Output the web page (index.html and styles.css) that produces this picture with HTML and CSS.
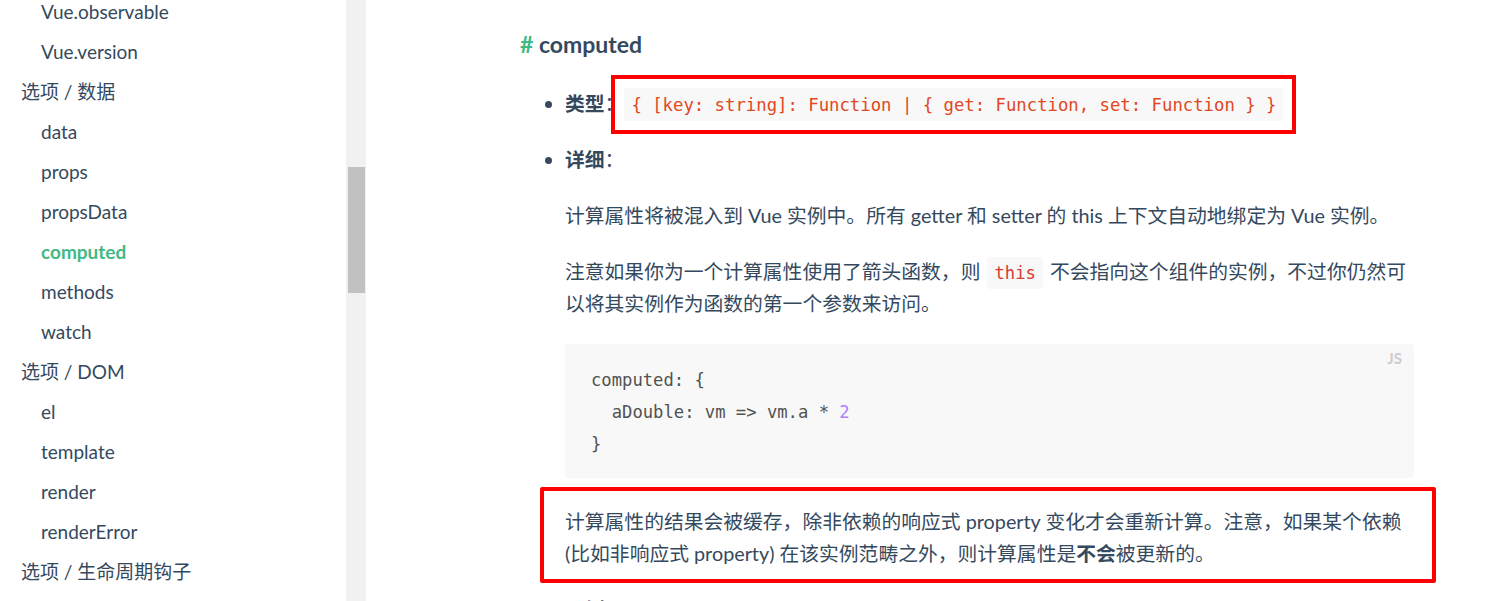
FILE: index.html
```html
<!DOCTYPE html>
<html lang="zh-CN">
<head>
<meta charset="utf-8">
<title>computed</title>
<link rel="stylesheet" href="styles.css">
</head>
<body>
<aside class="sidebar">
  <ul class="nav">
    <li class="sub">Vue.observable</li>
    <li class="sub">Vue.version</li>
    <li class="section">选项 / 数据</li>
    <li class="sub">data</li>
    <li class="sub">props</li>
    <li class="sub">propsData</li>
    <li class="sub active">computed</li>
    <li class="sub">methods</li>
    <li class="sub">watch</li>
    <li class="section">选项 / DOM</li>
    <li class="sub">el</li>
    <li class="sub">template</li>
    <li class="sub">render</li>
    <li class="sub">renderError</li>
    <li class="section">选项 / 生命周期钩子</li>
  </ul>
</aside>
<div class="scrollbar"><div class="thumb"></div></div>
<main class="main">
  <div class="content">
    <h3 class="title"><span class="hash">#</span> computed</h3>
    <ul class="props">
      <li><strong>类型</strong>：<code class="inline type">{ [key: string]: Function | { get: Function, set: Function } }</code></li>
      <li><strong>详细</strong>：
        <p>计算属性将被混入到 Vue 实例中。所有 getter 和 setter 的 this 上下文自动地绑定为 Vue 实例。</p>
        <p>注意如果你为一个计算属性使用了箭头函数，则 <code class="inline kw">this</code> 不会指向这个组件的实例，不过你仍然可以将其实例作为函数的第一个参数来访问。</p>
        <pre class="code"><span class="lang">JS</span><code>computed: {
  aDouble: vm =&gt; vm.a * <span class="num">2</span>
}</code></pre>
        <p class="boxed">计算属性的结果会被缓存，除非依赖的响应式 property 变化才会重新计算。注意，如果某个依赖 (比如非响应式 property) 在该实例范畴之外，则计算属性是<strong>不会</strong>被更新的。</p>
      </li>
      <li><strong>示例</strong>：</li>
    </ul>
  </div>
</main>
</body>
</html>
```

FILE: styles.css
```css
html, body {
  margin: 0;
  padding: 0;
  background: #fff;
}

body {
  display: flex;
  height: 601px;
  overflow: hidden;
  font-family: Lato, "Noto Sans CJK SC", sans-serif;
  color: #34495e;
}

.sidebar {
  flex: none;
  width: 346px;
  overflow: hidden;
}

.nav {
  list-style: none;
  margin: -8px 0 0;
  padding: 0 0 0 21px;
  font-size: 19px;
}

.nav li {
  line-height: 40px;
  white-space: nowrap;
}

.nav .sub {
  padding-left: 20px;
}

.nav .active {
  color: #42b983;
  font-weight: 700;
}

.scrollbar {
  flex: none;
  width: 20px;
  height: 601px;
  background: #f1f1f1;
}

.thumb {
  margin: 167px 0 0 2px;
  width: 17px;
  height: 126px;
  background: #c1c1c1;
}

.main {
  flex: 1;
  padding-left: 154px;
}

.content {
  width: 894px;
}

.title {
  margin: 28px 0 0;
  font-size: 23px;
  line-height: 32px;
  font-weight: 700;
}

.hash {
  color: #42b983;
}

.props {
  margin: 27px 0 0;
  padding-left: 45px;
  font-size: 19.8px;
  line-height: 32px;
  list-style: disc;
}

.props li + li {
  margin-top: 24px;
}

.props strong {
  font-weight: 700;
}

.props p {
  margin: 24px 0 0;
}

code.inline {
  font-family: "DejaVu Sans Mono", monospace;
  font-size: 17.3px;
  line-height: 1;
  color: #e2471e;
  background: #f8f8f8;
  padding: 6px 7px;
  margin: 0 2px;
  border-radius: 2px;
}

code.kw {
  font-size: 17.2px;
  color: #da3a30;
}

code.type {
  margin: 0;
  padding: 7px 7px 6px;
  border-radius: 0;
  outline: 4px solid #ff0000;
  outline-offset: 9px;
}

.code {
  position: relative;
  margin: 25px 0 27px;
  padding: 20px 26px 18px;
  background: #f8f8f8;
  border-radius: 2px;
  font-family: "DejaVu Sans Mono", monospace;
  font-size: 17.2px;
  line-height: 32px;
  color: #525252;
}

.code code {
  font-family: inherit;
}

.num {
  color: #ae81ff;
}

.lang {
  position: absolute;
  top: 0;
  right: 0;
  padding: 7px 12px 0;
  font-family: Lato, sans-serif;
  font-size: 15px;
  line-height: 15px;
  font-weight: 700;
  color: #ccc;
}

.props p.boxed {
  position: relative;
  margin-top: 27px;
}

.boxed::after {
  content: "";
  position: absolute;
  top: -18px;
  left: -25px;
  right: -22px;
  bottom: -14px;
  border: 4px solid #ff0000;
  border-radius: 2px;
  pointer-events: none;
}
```
